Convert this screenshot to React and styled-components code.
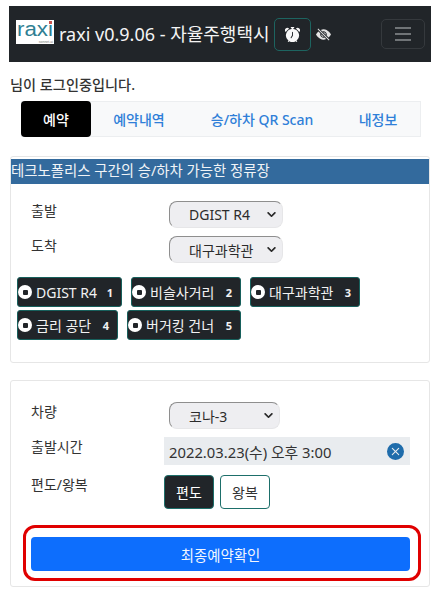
import React from 'react';
import styled, { createGlobalStyle } from 'styled-components';
import { BsAlarmFill, BsEyeSlashFill, BsXCircleFill, BsChevronDown } from 'react-icons/bs';

const GlobalStyle = createGlobalStyle`
  html, body {
    margin: 0;
    background: #fff;
  }
  body {
    font-family: 'Noto Sans', 'Noto Sans CJK KR', sans-serif;
    color: #212529;
  }
`;

const stops = [
  { name: 'DGIST R4', no: 1, width: 105 },
  { name: '비슬사거리', no: 2, width: 110 },
  { name: '대구과학관', no: 3, width: 110 },
  { name: '금리 공단', no: 4, width: 101 },
  { name: '버거킹 건너', no: 5, width: 114 },
];

const App = () => {
  return (
    <>
      <GlobalStyle />
      <Page>
        <Navbar>
          <Logo width="38" height="24" viewBox="0 0 38 24">
            <rect width="38" height="24" fill="#fff" />
            <text x="1" y="15.5" fontFamily="Liberation Sans" fontSize="20.5" fill="#2f7f93" textLength="36" lengthAdjust="spacingAndGlyphs">raxi</text>
            <rect x="33" y="1" width="3" height="3" fill="#c9544f" />
            <text x="37" y="23.2" fontFamily="Liberation Sans" fontSize="3.5" fill="#777" textAnchor="end">sonnet.ai</text>
          </Logo>
          <Brand>raxi v0.9.06 - 자율주행택시</Brand>
          <AlarmButton>
            <BsAlarmFill size={15} />
          </AlarmButton>
          <EyeIcon>
            <BsEyeSlashFill size={15} />
          </EyeIcon>
          <Toggler>
            <svg width="18" height="16" viewBox="0 0 18 16">
              <path d="M1 2h16M1 8h16M1 14h16" stroke="#8b8e91" strokeWidth="1.6" fill="none" />
            </svg>
          </Toggler>
        </Navbar>

        <LoginText>님이 로그인중입니다.</LoginText>

        <Tabs>
          <Tab $active $width={70}>예약</Tab>
          <Tab $width={96}>예약내역</Tab>
          <Tab $width={150}>승/하차 QR Scan</Tab>
          <Tab $width={82}>내정보</Tab>
        </Tabs>

        <Card $height={207}>
          <CardHeader>테크노폴리스 구간의 승/하차 가능한 정류장</CardHeader>
          <CardBody>
            <Row $top={17}>
              <Label>출발</Label>
              <Select $width={114}>
                <span>DGIST R4</span>
                <BsChevronDown size={9} strokeWidth={2} />
              </Select>
            </Row>
            <Row $top={8}>
              <Label>도착</Label>
              <Select $width={114}>
                <span>대구과학관</span>
                <BsChevronDown size={9} strokeWidth={2} />
              </Select>
            </Row>
            <Chips>
              {stops.map((s) => (
                <Chip key={s.no} style={{ width: s.width }}>
                  <Dot />
                  <span>{s.name}</span>
                  <ChipNo>{s.no}</ChipNo>
                </Chip>
              ))}
            </Chips>
          </CardBody>
        </Card>

        <Card $height={207} $top={17}>
          <CardBody>
            <Row $top={21}>
              <Label>차량</Label>
              <Select $width={111}>
                <span>코나-3</span>
                <BsChevronDown size={9} strokeWidth={2} />
              </Select>
            </Row>
            <TimeRow>
              <Label>출발시간</Label>
              <TimeField>
                <span>2022.03.23(수) 오후 3:00</span>
                <BsXCircleFill size={17} color="#1f6cab" />
              </TimeField>
            </TimeRow>
            <TimeRow $top={10}>
              <Label>편도/왕복</Label>
              <TripButtons>
                <TripButton $active>편도</TripButton>
                <TripButton>왕복</TripButton>
              </TripButtons>
            </TimeRow>
            <Highlight>
              <SubmitButton>최종예약확인</SubmitButton>
            </Highlight>
          </CardBody>
        </Card>
      </Page>
    </>
  );
};

const Page = styled.div`
  width: 440px;
  height: 599px;
  box-sizing: border-box;
  padding-top: 6px;
  overflow: hidden;
`;

const Navbar = styled.div`
  display: flex;
  align-items: center;
  height: 56px;
  margin: 0 9px;
  padding: 0 7px;
  box-sizing: border-box;
  background: #212529;
`;

const Logo = styled.svg`
  flex: none;
  margin-top: -4px;
  overflow: visible;
`;

const Brand = styled.div`
  margin-left: 5px;
  font-size: 18px;
  line-height: 24px;
  color: #f4f4f4;
  white-space: nowrap;
`;

const AlarmButton = styled.div`
  width: 37px;
  height: 33px;
  margin-left: 4px;
  box-sizing: border-box;
  border: 1px solid #1d6460;
  border-radius: 5px;
  display: flex;
  align-items: center;
  justify-content: center;
  color: #f8f8f8;
`;

const EyeIcon = styled.div`
  margin-left: 5px;
  display: flex;
  color: #e4e4e4;
`;

const Toggler = styled.div`
  width: 44px;
  height: 30px;
  margin-left: auto;
  margin-right: -1px;
  box-sizing: border-box;
  border: 1px solid #35393d;
  border-radius: 5px;
  display: flex;
  align-items: center;
  justify-content: center;
`;

const LoginText = styled.div`
  margin: 13px 0 0 10px;
  font-size: 14.2px;
  line-height: 20px;
  font-weight: 500;
  color: #333;
`;

const Tabs = styled.div`
  display: flex;
  width: 400px;
  height: 36px;
  margin: 6px 0 0 21px;
  box-sizing: border-box;
  background: #f8f9fa;
  border: 1px solid #eceef0;
`;

const Tab = styled.div`
  width: ${(p) => p.$width}px;
  margin: ${(p) => (p.$active ? '-1px 0 -1px -1px' : '0')};
  display: flex;
  align-items: center;
  justify-content: center;
  border-radius: 4px;
  font-size: 14px;
  font-weight: 500;
  white-space: nowrap;
  color: ${(p) => (p.$active ? '#fff' : '#2f7fd8')};
  background: ${(p) => (p.$active ? '#000' : 'transparent')};
`;

const Card = styled.div`
  height: ${(p) => p.$height}px;
  margin: ${(p) => p.$top || 19}px 10px 0;
  box-sizing: border-box;
  border: 1px solid #e6e6e6;
  border-radius: 3px;
  background: #fff;
`;

const CardHeader = styled.div`
  height: 25px;
  margin-top: 2px;
  background: #336a9d;
  color: #f1f4f7;
  font-size: 14.4px;
  line-height: 23px;
  white-space: nowrap;
`;

const CardBody = styled.div`
  display: flex;
  flex-direction: column;
`;

const Row = styled.div`
  display: flex;
  align-items: flex-start;
  margin-top: ${(p) => p.$top}px;
  padding-left: 20px;
`;

const Label = styled.div`
  width: 138px;
  flex: none;
  font-size: 14px;
  line-height: 20px;
  color: #333;
`;

const Select = styled.div`
  width: ${(p) => p.$width}px;
  height: 27px;
  box-sizing: border-box;
  padding: 0 6px 0 19px;
  display: flex;
  align-items: center;
  justify-content: space-between;
  background: #eeeef1;
  border: 1.5px solid #e6e6e8;
  border-top-color: #8e8e8e;
  border-left-color: #8e8e8e;
  border-radius: 8px;
  font-size: 14px;
  color: #2b2b2b;
  white-space: nowrap;
`;

const Chips = styled.div`
  display: flex;
  flex-wrap: wrap;
  gap: 3px 9px;
  margin: 14px 0 0 6px;
`;

const Chip = styled.div`
  height: 30px;
  box-sizing: border-box;
  padding: 0 8px 0 0;
  display: flex;
  align-items: center;
  gap: 4px;
  background: #212529;
  border: 1px solid #17605c;
  border-radius: 3px;
  color: #f2f2f2;
  font-size: 14px;
  white-space: nowrap;
`;

const Dot = styled.span`
  width: 14px;
  height: 14px;
  flex: none;
  display: flex;
  align-items: center;
  justify-content: center;
  border-radius: 50%;
  background: #fff;

  &::after {
    content: '';
    width: 5px;
    height: 5px;
    border-radius: 1px;
    background: #212529;
  }
`;

const ChipNo = styled.span`
  margin-left: auto;
  font-size: 11px;
  font-weight: 700;
`;

const TimeRow = styled.div`
  display: flex;
  align-items: flex-start;
  margin-top: ${(p) => p.$top || 8}px;
  padding: 0 19px 0 20px;
`;

const TimeField = styled.div`
  width: 246px;
  height: 28px;
  margin-left: -5px;
  box-sizing: border-box;
  padding: 0 6px 0 5px;
  display: flex;
  align-items: center;
  justify-content: space-between;
  background: #e9ecef;
  font-size: 14.8px;
  color: #333;
  white-space: nowrap;
`;

const TripButtons = styled.div`
  display: flex;
  gap: 6px;
  margin-left: -5px;
`;

const TripButton = styled.div`
  width: 50px;
  height: 34px;
  box-sizing: border-box;
  display: flex;
  align-items: center;
  justify-content: center;
  border: 1px solid #1d6f6a;
  border-radius: 4px;
  font-size: 14px;
  color: ${(p) => (p.$active ? '#fff' : '#333')};
  background: ${(p) => (p.$active ? '#212529' : '#fff')};
`;

const Highlight = styled.div`
  width: 398px;
  height: 56px;
  margin: 16px 0 0 12px;
  box-sizing: border-box;
  padding: 9px 5px;
  border: 3px solid #e00000;
  border-radius: 12px;
`;

const SubmitButton = styled.div`
  width: 379px;
  height: 34px;
  display: flex;
  align-items: center;
  justify-content: center;
  background: #0d6efd;
  border-radius: 4px;
  color: #f2f7ff;
  font-size: 14.4px;
`;

export default App;
